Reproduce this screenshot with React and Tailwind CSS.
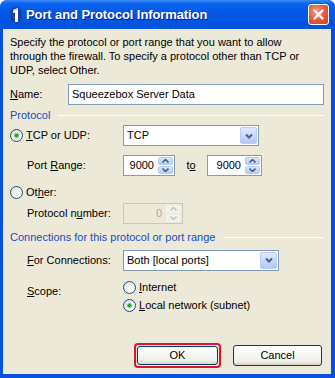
import React from 'react'

const font = { fontFamily: '"Liberation Sans", Arial, sans-serif' }

function Radio({ checked }) {
  return (
    <span className="relative inline-block w-[13px] h-[13px] rounded-full border border-[#1C5180] bg-[radial-gradient(circle_at_70%_70%,#ffffff_0%,#DCDCD7_100%)] shrink-0">
      {checked && (
        <span className="absolute left-[3px] top-[3px] w-[5px] h-[5px] rounded-full bg-[#21A121] border border-[#5ec85e]" />
      )}
    </span>
  )
}

function SpinBox({ value, width, disabled }) {
  return (
    <div
      className={`flex items-stretch h-[21px] border ${disabled ? 'border-[#C9C7BA] bg-[#ECE9D8]' : 'border-[#7F9DB9] bg-white'}`}
      style={{ width }}
    >
      <div className={`flex-1 flex items-center justify-end pr-[3px] ${disabled ? 'text-[#ACA899]' : 'text-black'}`}>
        {value}
      </div>
      <div className="flex flex-col w-[15px] m-[1px] gap-[1px]">
        {[0, 1].map(i => (
          <div
            key={i}
            className={`flex-1 flex items-center justify-center rounded-[2px] ${disabled ? 'bg-[#F2F1EA]' : 'bg-[linear-gradient(to_bottom,#DCE7FD,#B6CAF7)] border border-[#B9CCF5]'}`}
          >
            <svg width="7" height="4" viewBox="0 0 7 4">
              <path
                d={i === 0 ? 'M0.5 3.5 L3.5 0.5 L6.5 3.5' : 'M0.5 0.5 L3.5 3.5 L6.5 0.5'}
                fill="none"
                stroke={disabled ? '#C9C7BA' : '#4D6185'}
                strokeWidth="1.6"
              />
            </svg>
          </div>
        ))}
      </div>
    </div>
  )
}

function Select({ value, width }) {
  return (
    <div className="flex items-stretch h-[21px] border border-[#7F9DB9] bg-white" style={{ width }}>
      <div className="flex-1 flex items-center pl-[3px]">{value}</div>
      <div className="w-[17px] m-[1px] flex items-center justify-center rounded-[2px] border border-[#B9CCF5] bg-[linear-gradient(to_bottom,#E1EAFE,#B4C8F6)]">
        <svg width="8" height="6" viewBox="0 0 8 6">
          <path d="M1 1.5 L4 4.5 L7 1.5" fill="none" stroke="#4D6185" strokeWidth="2" />
        </svg>
      </div>
    </div>
  )
}

function GroupHeader({ children }) {
  return (
    <div className="flex items-center h-[14px] pr-[4px]">
      <span className="text-[#1A4BC4] pr-[8px] whitespace-nowrap">{children}</span>
      <div className="flex-1 h-[1px] bg-[#D0D0BF] border-b border-white" />
    </div>
  )
}

export default function App() {
  return (
    <div
      className="w-[335px] h-[378px] flex flex-col bg-[#0A50DE] rounded-t-[7px] overflow-hidden text-[11px] text-black"
      style={font}
    >
      {/* Title bar */}
      <div className="h-[29px] shrink-0 flex items-center pl-[9px] pr-[6px] bg-[linear-gradient(to_bottom,#3D8BF6_0%,#0A64EE_12%,#0359E6_40%,#0055E3_70%,#0150D8_100%)]">
        <svg width="14" height="18" viewBox="0 0 14 18" className="shrink-0">
          <ellipse cx="7" cy="9" rx="6" ry="8" fill="#1D3F9E" />
          <path d="M4 4 L9 2 L9 16 L6 16 L6 6.5 L4 7 Z" fill="#ffffff" />
          <path d="M4 4 L9 2 L9 4 L4 6 Z" fill="#C9D9F7" />
        </svg>
        <span className="ml-[3px] text-white font-bold text-[13px] tracking-[-0.1px] [text-shadow:1px_1px_#0A1E8C]">
          Port and Protocol Information
        </span>
        <div className="ml-auto w-[21px] h-[21px] rounded-[3px] border border-white bg-[radial-gradient(circle_at_40%_35%,#F09C85_0%,#E2593A_55%,#C94421_100%)] flex items-center justify-center">
          <svg width="11" height="11" viewBox="0 0 11 11">
            <path d="M1.5 1.5 L9.5 9.5 M9.5 1.5 L1.5 9.5" stroke="#fff" strokeWidth="2.2" strokeLinecap="square" />
          </svg>
        </div>
      </div>

      {/* Body */}
      <div className="flex-1 ml-[3px] mr-[4px] mb-[4px] bg-[#ECE9D8] pl-[7px] pr-[3px] pt-[6px] flex flex-col">
        <p className="leading-[14px] pr-[20px]">
          Specify the protocol or port range that you want to allow through the firewall. To specify a protocol other than TCP or UDP, select Other.
        </p>

        <div className="mt-[7px] flex items-center h-[21px]">
          <span className="w-[58px]"><u>N</u>ame:</span>
          <div className="flex-1 h-[21px] border border-[#7F9DB9] bg-white flex items-center pl-[3px] mr-[4px]">
            Squeezebox Server Data
          </div>
        </div>

        <div className="mt-[3px]">
          <GroupHeader>Protocol</GroupHeader>
        </div>

        <div className="mt-[3px] flex items-center h-[21px]">
          <div className="w-[113px] flex items-center gap-[3px]">
            <Radio checked />
            <span><u>T</u>CP or UDP:</span>
          </div>
          <Select value="TCP" width={136} />
        </div>

        <div className="mt-[9px] flex items-center h-[21px]">
          <span className="w-[113px] pl-[17px]">Port <u>R</u>ange:</span>
          <SpinBox value="9000" width={52} />
          <span className="w-[32px] text-center">t<u>o</u></span>
          <SpinBox value="9000" width={55} />
        </div>

        <div className="mt-[8px] flex items-center gap-[3px] h-[16px]">
          <Radio />
          <span>Ot<u>h</u>er:</span>
        </div>

        <div className="mt-[4px] flex items-center h-[18px]">
          <span className="w-[113px] pl-[17px]">Protocol n<u>u</u>mber:</span>
          <SpinBox value="0" width={60} disabled />
        </div>

        <div className="mt-[8px]">
          <GroupHeader>Connections for this protocol or port range</GroupHeader>
        </div>

        <div className="mt-[5px] flex items-center h-[22px]">
          <span className="w-[113px] pl-[17px]"><u>F</u>or Connections:</span>
          <Select value="Both [local ports]" width={156} />
        </div>

        <div className="mt-[8px] flex">
          <span className="w-[113px] pl-[17px] pt-[4px]"><u>S</u>cope:</span>
          <div className="flex flex-col gap-[2px]">
            <div className="flex items-center gap-[3px] h-[16px]">
              <Radio />
              <span><u>I</u>nternet</span>
            </div>
            <div className="flex items-center gap-[3px] h-[16px]">
              <Radio checked />
              <span><u>L</u>ocal network (subnet)</span>
            </div>
          </div>
        </div>

        <div className="mt-auto mb-[6px] flex justify-end items-center gap-[12px] pr-[6px]">
          <div className="rounded-[4px] border-2 border-[#E3122A] p-[1px]">
            <button className="w-[81px] h-[19px] rounded-[3px] border border-[#003C74] bg-[linear-gradient(to_bottom,#FFFFFF,#F0F0EA_80%,#D6D0C5)]">
              OK
            </button>
          </div>
          <button className="w-[89px] h-[21px] rounded-[3px] border border-[#003C74] bg-[linear-gradient(to_bottom,#FFFFFF,#F0F0EA_80%,#D6D0C5)]">
            Cancel
          </button>
        </div>
      </div>
    </div>
  )
}
